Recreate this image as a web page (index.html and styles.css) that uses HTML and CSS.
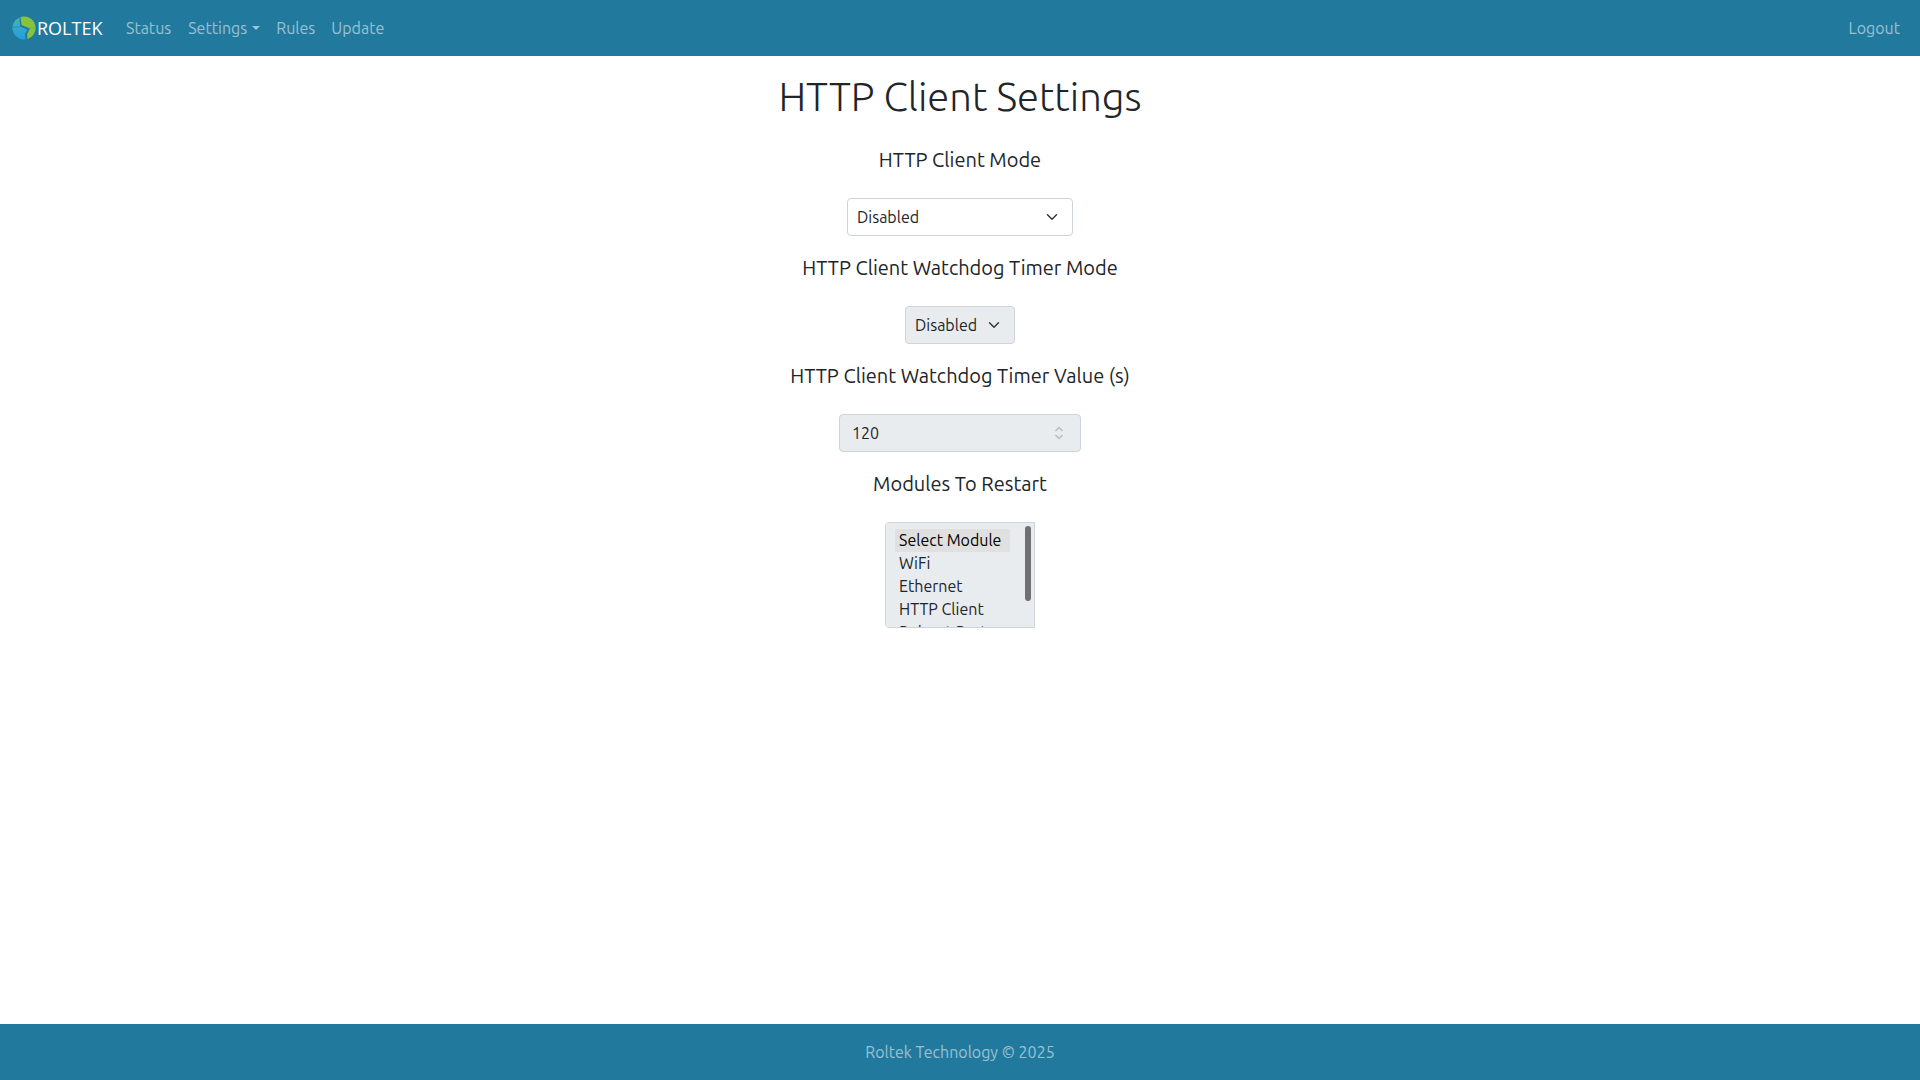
FILE: index.html
```html
<!DOCTYPE html>
<html lang="en">
<head>
<meta charset="utf-8">
<meta name="viewport" content="width=device-width, initial-scale=1">
<title>HTTP Client Settings</title>
<link rel="stylesheet" href="styles.css">
</head>
<body>
<header class="navbar">
  <a class="brand" href="#" aria-label="Roltek">
    <svg class="brand-mark" viewBox="0 0 24 24" aria-hidden="true">
      <defs>
        <linearGradient id="left-half" x1="0" y1="0" x2="0" y2="1">
          <stop offset="0" stop-color="#4fb3a6"/>
          <stop offset=".5" stop-color="#33a7cf"/>
          <stop offset="1" stop-color="#219fdc"/>
        </linearGradient>
      </defs>
      <path d="M7.500 1.400A11.500 11.500 0 0 0 13.500 23.400L13 18 15.500 13.800 8 10.500Z" fill="url(#left-half)"/>
      <path d="M8.500 1A11.500 11.500 0 0 1 15.500 23L15 18.500 18 12.500 9.500 9Z" fill="#86c440"/>
      <path d="M.5 11.500 8 10.500" stroke="#2b86a8" stroke-width=".7"/>
      <path d="M17.500 12.500 23.500 11" stroke="#6db04c" stroke-width=".7"/>
    </svg>
    <span class="brand-name">ROLTEK</span>
  </a>
  <nav class="nav">
    <a class="nav-link" href="#">Status</a>
    <a class="nav-link dropdown" href="#">Settings</a>
    <a class="nav-link" href="#">Rules</a>
    <a class="nav-link" href="#">Update</a>
  </nav>
  <a class="nav-link logout" href="#">Logout</a>
</header>
<main class="content">
  <h1 class="title">HTTP Client Settings</h1>
  <form class="settings">
    <div class="field">
      <label class="label" for="mode">HTTP Client Mode</label>
      <select class="control select wide" id="mode"><option>Disabled</option><option>Enabled</option></select>
    </div>
    <div class="field">
      <label class="label" for="wd-mode">HTTP Client Watchdog Timer Mode</label>
      <select class="control select narrow" id="wd-mode" disabled><option>Disabled</option><option>Enabled</option></select>
    </div>
    <div class="field">
      <label class="label" for="wd-value">HTTP Client Watchdog Timer Value (s)</label>
      <input class="control number" id="wd-value" type="number" value="120" disabled>
    </div>
    <div class="field">
      <label class="label" for="modules">Modules To Restart</label>
      <div class="list-wrap">
        <select class="control list" id="modules" multiple disabled>
          <option selected>Select Module</option>
          <option>WiFi</option>
          <option>Ethernet</option>
          <option>HTTP Client</option>
          <option>Reboot Port</option>
        </select>
        <span class="thumb" aria-hidden="true"></span>
      </div>
    </div>
  </form>
</main>
<footer class="footer">Roltek Technology © 2025</footer>
</body>
</html>
```
FILE: styles.css
```css
*, *::before, *::after { box-sizing: border-box; }
body {
  margin: 0;
  min-height: 100vh;
  display: flex;
  flex-direction: column;
  font: 400 16px/24px "Ubuntu", "Noto Sans", sans-serif;
  color: #212529;
  background: #fff;
}
.navbar {
  display: flex;
  align-items: center;
  height: 56px;
  padding: 0 12px;
  background: #217a9e;
}
.brand { display: flex; align-items: center; gap: 1px; margin-right: 16px; color: #fff; text-decoration: none; }
.brand-mark { width: 24px; height: 24px; }
.brand-name { width: 65px; font: 400 18px/24px "Open Sans", sans-serif; }
.nav { display: flex; flex: 1; }
.nav-link { padding: 8px; color: rgba(255, 255, 255, .55); text-decoration: none; }
.dropdown { margin-left: 1px; }
.dropdown::after {
  content: "";
  display: inline-block;
  margin-left: 5px;
  vertical-align: 4px;
  border: 4px solid transparent;
  border-top-color: currentColor;
  border-bottom: 0;
}
.content { flex: 1; padding: 16px 12px; text-align: center; }
.title { margin: 0 0 26px; font: 300 40px/50px "Ubuntu", "Open Sans", sans-serif; }
.settings { display: flex; flex-direction: column; gap: 20px; }
.field { display: flex; flex-direction: column; align-items: center; gap: 26px; }
.label { font-size: 20px; line-height: 24px; }
.control {
  margin: 0;
  border: 1px solid #ced4da;
  border-radius: 4px;
  font: inherit;
  color: #212529;
  background-color: #fff;
  opacity: 1;
}
.control:disabled { background-color: #e9ecef; }
.select, .number { height: 38px; appearance: none; background-repeat: no-repeat; }
.select {
  padding: 0 28px 0 9px;
  background-image: url("data:image/svg+xml,%3Csvg xmlns='http://www.w3.org/2000/svg' viewBox='0 0 16 16'%3E%3Cpath fill='none' stroke='%23343a40' stroke-linecap='round' stroke-linejoin='round' stroke-width='2' d='m2 5 6 6 6-6'/%3E%3C/svg%3E");
  background-position: right 14px center;
  background-size: 12px 12px;
}
.wide { width: 226px; }
.narrow { width: 110px; }
.number {
  width: 242px;
  padding: 0 12px;
  appearance: textfield;
  background-image: url("data:image/svg+xml,%3Csvg xmlns='http://www.w3.org/2000/svg' viewBox='0 0 10 14'%3E%3Cpath fill='none' stroke='%23b9bbbe' stroke-width='1.500' d='M1.500 5 5 1.500 8.500 5M1.500 9 5 12.500 8.500 9'/%3E%3C/svg%3E");
  background-position: right 16px center;
  background-size: 10px 14px;
}
.list-wrap { position: relative; }
.list {
  display: block;
  width: 150px;
  height: 106px;
  padding: 6px 24px 0 9px;
  border-radius: 4px 0 0 4px;
  overflow-y: scroll;
  scrollbar-width: none;
}
.list option { height: 23px; min-height: 23px; padding: 2px 4px 0; line-height: 20px; color: #212529; }
.list option:checked { color: #000; background: #e0e0e0; }
.thumb {
  position: absolute;
  top: 4px;
  right: 4px;
  width: 6px;
  height: 75px;
  border-radius: 3px;
  background: #6f7072;
}
.footer { height: 56px; padding: 16px 12px; text-align: center; color: rgba(255, 255, 255, .55); background: #217a9e; }
```
